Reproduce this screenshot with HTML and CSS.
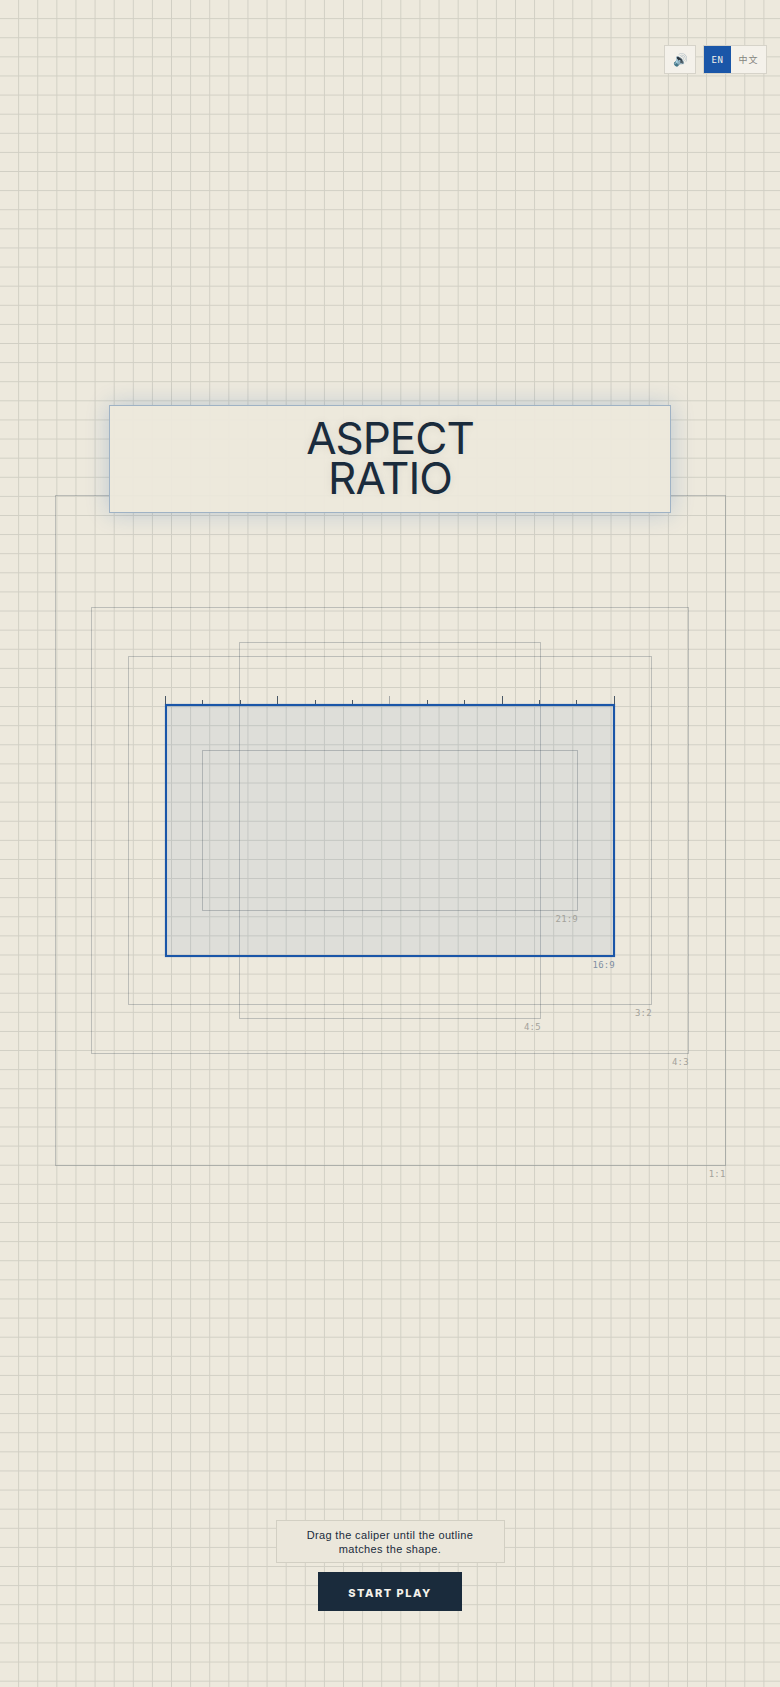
FILE: index.html
```html
<!DOCTYPE html>
<html lang="en">
<head>
<meta charset="utf-8">
<title>Aspect Ratio</title>
<link rel="stylesheet" href="styles.css">
</head>
<body>
<div class="page">
  <div class="controls">
    <button class="sound" type="button" aria-label="Sound">🔊</button>
    <div class="lang">
      <button class="lang-btn active" type="button">EN</button>
      <button class="lang-btn" type="button">中文</button>
    </div>
  </div>
  <main class="stage">
    <div class="frame r11"><span class="label">1:1</span></div>
    <div class="frame r43"><span class="label">4:3</span></div>
    <div class="frame r32"><span class="label">3:2</span></div>
    <div class="frame r45"><span class="label">4:5</span></div>
    <div class="frame r169 target">
      <div class="ticks">
        <i class="tick major"></i><i class="tick"></i><i class="tick"></i><i class="tick major"></i><i class="tick"></i><i class="tick"></i><i class="tick major mid"></i><i class="tick"></i><i class="tick"></i><i class="tick major"></i><i class="tick"></i><i class="tick"></i><i class="tick major"></i>
      </div>
      <span class="label">16:9</span>
    </div>
    <div class="frame r219"><span class="label">21:9</span></div>
    <div class="title-panel">
      <h1 class="title">ASPECT<br>RATIO</h1>
    </div>
  </main>
  <footer class="footer">
    <p class="prompt">Drag the caliper until the outline matches the shape.</p>
    <button class="start" type="button">START PLAY</button>
  </footer>
</div>
</body>
</html>
```
FILE: styles.css
```css
* { box-sizing: border-box; }
html, body { margin: 0; height: 100%; }
body {
  background-color: #ede9dd;
  background-image:
    linear-gradient(90deg, transparent calc(100% - 1px), #d1cfc4 calc(100% - 1px)),
    linear-gradient(180deg, transparent calc(100% - 1px), #d1cfc4 calc(100% - 1px));
  background-size: 19.11px 19.11px;
  font-family: "Inter", "Liberation Sans", sans-serif;
  color: #1a2b3c;
}
.page {
  position: relative;
  height: 1687px;
  display: flex;
  flex-direction: column;
  padding-top: 495px;
  overflow: hidden;
}
.controls {
  position: absolute;
  top: 45px;
  right: 13px;
  display: flex;
  gap: 7px;
}
.sound {
  width: 32px;
  height: 29px;
  padding: 0;
  border: 1px solid #d6d3c9;
  background: #f4f1ea;
  font-size: 12px;
  line-height: 1;
  color: #3a4a5c;
}
.lang {
  display: flex;
  border: 1px solid #d6d3c9;
  background: #f4f1ea;
}
.lang-btn {
  width: 35px;
  height: 27px;
  padding: 0;
  border: 0;
  background: transparent;
  font-family: "DejaVu Sans Mono", "Noto Sans CJK SC", monospace;
  font-size: 9px;
  letter-spacing: 1px;
  color: #85857f;
}
.lang-btn.active {
  width: 27px;
  background: #1a56a8;
  letter-spacing: 0.5px;
  color: #f4f1ea;
}
.stage {
  position: relative;
  height: 671px;
  display: grid;
  place-items: center;
  flex: none;
}
.frame {
  grid-area: 1 / 1;
  position: relative;
  border: 1px solid rgba(26, 43, 60, 0.23);
}
.r11 { width: 671px; height: 671px; }
.r43 { width: 597.5px; height: 447px; }
.r32 { width: 523.5px; height: 349px; }
.r45 { width: 301.5px; height: 377px; }
.r169 { width: 450px; height: 253px; }
.r219 { width: 376px; height: 161px; }
.target {
  border: 2px solid #1a56a8;
  background: rgba(26, 86, 168, 0.07);
  box-shadow: inset 0 1px 2px rgba(26, 86, 168, 0.16), 0 0 1px rgba(26, 86, 168, 0.5);
}
.label {
  position: absolute;
  right: -1px;
  top: 100%;
  margin-top: 4px;
  font-family: "DejaVu Sans Mono", monospace;
  font-size: 9px;
  line-height: 11px;
  letter-spacing: 0.2px;
  color: #a3a29b;
}
.target .label { right: -2px; margin-top: 5px; color: #7f8fa3; }
.ticks {
  position: absolute;
  left: -2px;
  right: -2px;
  bottom: 100%;
  margin-bottom: 2px;
  height: 8px;
  display: flex;
  justify-content: space-between;
  align-items: flex-end;
}
.tick {
  display: block;
  width: 1px;
  height: 4px;
  background: #4a5866;
}
.tick.major { height: 8px; }
.tick.mid { background: #a5a7a6; }
.title-panel {
  position: absolute;
  top: -90px;
  left: 109px;
  width: 562px;
  height: 108px;
  display: flex;
  align-items: center;
  justify-content: center;
  padding-bottom: 2px;
  background: rgba(236, 232, 220, 0.96);
  border: 1px solid #9fb2c4;
  box-shadow: 0 0 22px rgba(26, 86, 168, 0.24);
}
.title {
  margin: 0;
  font-size: 44px;
  font-weight: 400;
  line-height: 40px;
  letter-spacing: -1px;
  text-align: center;
  color: #1a2b3c;
  text-shadow: 0 0 10px rgba(26, 43, 60, 0.08);
}
.footer {
  margin-top: auto;
  padding-bottom: 76px;
  display: flex;
  flex-direction: column;
  align-items: center;
  gap: 9px;
}
.prompt {
  margin: 0;
  width: 229px;
  height: 43px;
  padding: 7px 20px;
  background: #ebe7db;
  border: 1px solid #d2cfc3;
  font-family: "Liberation Sans", sans-serif;
  font-size: 11px;
  line-height: 14px;
  letter-spacing: 0.35px;
  text-align: center;
  color: #1a2b3c;
}
.start {
  width: 144px;
  height: 39px;
  padding: 2px 0 0;
  border: 0;
  background: #1a2b3c;
  color: #f4f1ea;
  font-family: "Inter", sans-serif;
  font-size: 11px;
  font-weight: 800;
  letter-spacing: 1.5px;
}
```
